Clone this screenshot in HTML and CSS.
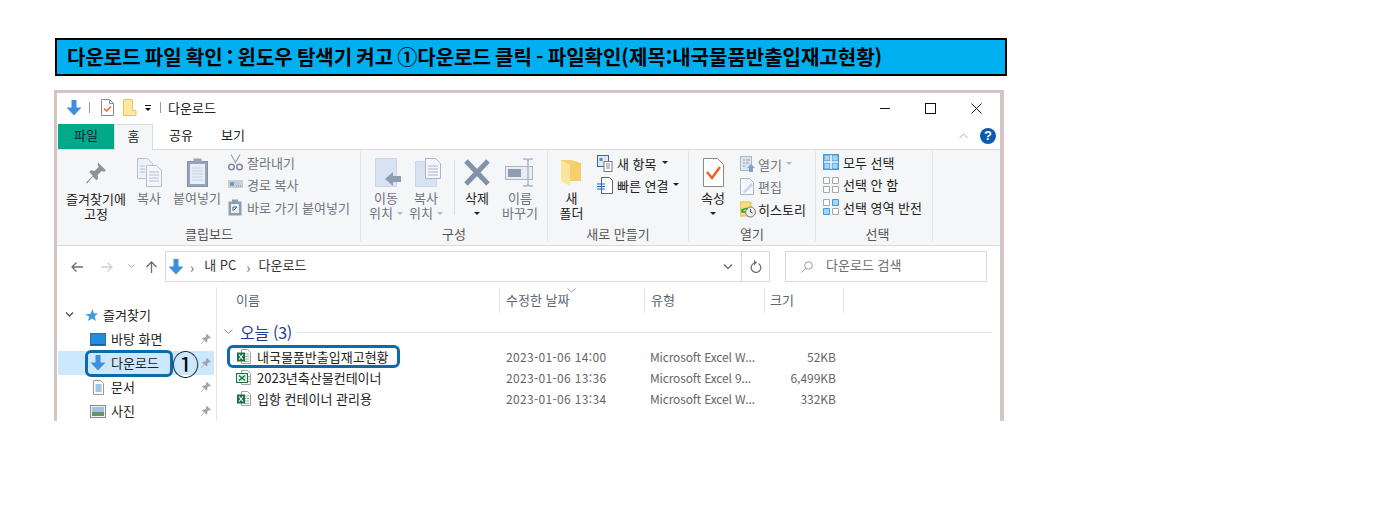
FILE: index.html
```html
<!DOCTYPE html>
<html lang="ko">
<head>
    <meta charset="UTF-8">
    <title>다운로드 파일 확인</title>
    <link rel="stylesheet" href="styles.css">
</head>
<body>
    <svg class="defs" width="0" height="0">
        <symbol id="down" viewBox="0 0 16 16"><path d="M5.500 0h5v7.500h5L8 15.500 .5 7.500h5z" fill="#3d8fdc"/></symbol>
        <symbol id="pin" viewBox="0 0 12 12"><path d="M7 1l4 4-1 .6-1.200-.4-1.600 1.600.3 1.700-.9.9-2-2L1.500 11l-.5-.5 3.100-3.100-2-2 .9-.9 1.700.3 1.600-1.600-.4-1.200z" fill="#a0a4aa"/></symbol>
        <symbol id="xls" viewBox="0 0 16 16"><path d="M5.500 .5h6l3 3v11h-9z" fill="#fff" stroke="#a3a3a3"/><path d="M8 5h5M8 7.500h5M8 10h5M8 12.500h5" stroke="#8bb59c"/><rect x="1" y="3.500" width="8" height="9" fill="#1d7044"/><path d="M3 5.500l4 5M7 5.500l-4 5" stroke="#fff" stroke-width="1.200"/></symbol>
        <symbol id="xls-old" viewBox="0 0 16 16"><path d="M5.500 .5h6l3 3v11h-9z" fill="#fff" stroke="#a3a3a3"/><path d="M11 6.500h3M11 9h3M11 11.500h3" stroke="#8bb59c"/><rect x=".5" y="3.500" width="11" height="9" fill="#e4f2e8" stroke="#1d7044"/><path d="M3 5.500l6 5M9 5.500l-6 5" stroke="#1d7044" stroke-width="1.500"/></symbol>
    </svg>

    <h1 class="banner">다운로드 파일 확인 : 윈도우 탐색기 켜고 ①다운로드 클릭 - 파일확인(제목:내국물품반출입재고현황)</h1>

    <div class="window">
        <div class="titlebar">
            <svg class="qa-arrow" width="16" height="16"><use href="#down"/></svg>
            <span class="qa-sep"></span>
            <svg class="qa-check" width="13" height="17" viewBox="0 0 13 17"><path d="M.5.5h8l4 4v12H.500z" fill="#fff" stroke="#8a8a8a"/><path d="M8.500.5v4h4" fill="none" stroke="#8a8a8a"/><path d="M3 9.500l2.500 2.500L10 7.500" fill="none" stroke="#e8622a" stroke-width="1.500"/></svg>
            <svg class="qa-folder" width="14" height="17" viewBox="0 0 14 17"><path d="M.5.5h9v11h3.500v5H.5z" fill="#ffe9a0" stroke="#e8c45a"/></svg>
            <span class="qa-drop"></span>
            <span class="qa-sep second"></span>
            <span class="title-text">다운로드</span>
            <div class="win-buttons">
                <svg width="10" height="10"><path d="M0 5.500h10" stroke="#111"/></svg>
                <svg width="11" height="11"><rect x=".5" y=".5" width="10" height="10" fill="none" stroke="#111"/></svg>
                <svg width="11" height="11"><path d="M.5.5l10 10M10.500.5l-10 10" stroke="#111"/></svg>
            </div>
        </div>

        <div class="tabs">
            <div class="tab file">파일</div>
            <div class="tab home">홈</div>
            <div class="tab share">공유</div>
            <div class="tab view">보기</div>
            <svg class="collapse" width="9" height="6"><path d="M.5 5L4.500 1l4 4" fill="none" stroke="#a8a8a8"/></svg>
            <span class="help">?</span>
        </div>

        <div class="ribbon">
            <section class="group clip">
                <div class="tools">
                    <div class="big w-pin">
                        <svg width="22" height="24" viewBox="0 0 22 24"><path d="M13 1l8 8-2 1.200-2.400-.8-4 4 .6 3.600-1.800 1.800-3.600-3.600L2 22l-1-1 6.800-6.800-3.600-3.600L6 8.800l3.600.6 4-4-.8-2.400z" fill="#8e9297"/></svg>
                        <span>즐겨찾기에<br>고정</span>
                    </div>
                    <div class="big w-copy off">
                        <svg width="25" height="29" viewBox="0 0 25 29"><path d="M.5.500h10l5 5v15H.500z" fill="#eef2f8" stroke="#b4c0d4"/><path d="M9.500 7.500h10l5 5v16h-15z" fill="#f4f6fa" stroke="#b4c0d4"/><path d="M12 14h10M12 17h10M12 20h10M12 23h10M3 8h5M3 11h5M3 14h5" stroke="#b4c0d4"/></svg>
                        <span>복사</span>
                    </div>
                    <div class="big w-paste off">
                        <svg width="21" height="29" viewBox="0 0 21 29"><rect x=".5" y="3.500" width="20" height="25" fill="#96a3b8" stroke="#8492a8"/><rect x="3" y="6" width="15" height="20" fill="#e8eef8"/><rect x="6.500" y=".5" width="8" height="5" fill="#96a3b8"/><path d="M5 10h11M5 13h11M5 16h11M5 19h11M5 22h11" stroke="#c8d2e2"/></svg>
                        <span>붙여넣기</span>
                    </div>
                    <div class="stack">
                        <div class="small off">
                            <svg width="15" height="17" viewBox="0 0 15 17"><path d="M3 .5l5 9M12 .5l-5 9" stroke="#9aa6b8" stroke-width="1.200"/><circle cx="3.500" cy="13" r="2.800" fill="none" stroke="#7d8ba0" stroke-width="1.500"/><circle cx="11.500" cy="13" r="2.800" fill="none" stroke="#7d8ba0" stroke-width="1.500"/></svg>
                            <span>잘라내기</span>
                        </div>
                        <div class="small off">
                            <svg width="15" height="17" viewBox="0 0 15 17"><rect y="4" width="15" height="8" fill="#c6d0de"/><path d="M2 6l1 4 1-4 1 4 1-4M8 10h1M10 10h1M12 10h1" stroke="#6b7a90" fill="none" stroke-width=".8"/></svg>
                            <span>경로 복사</span>
                        </div>
                        <div class="small off">
                            <svg width="15" height="17" viewBox="0 0 15 17"><rect x=".5" y="2.500" width="13" height="14" fill="#8f9db2"/><rect x="3" y="5" width="8" height="9" fill="#e8eef8"/><rect x="4" y=".5" width="6" height="3" fill="#8f9db2"/><path d="M5 12V8h4M9 8l-3 3" stroke="#55647a" fill="none"/></svg>
                            <span>바로 가기 붙여넣기</span>
                        </div>
                    </div>
                </div>
                <div class="group-name">클립보드</div>
            </section>

            <section class="group org">
                <div class="tools">
                    <div class="big w-move off">
                        <svg width="26" height="29" viewBox="0 0 26 29"><rect x=".5" y=".5" width="21" height="28" fill="#d8e2f0" stroke="#ccd6e6"/><path d="M10 21l8-7v4h8v6h-8v4z" fill="#8f9db2"/></svg>
                        <span>이동<br>위치<i class="tri light"></i></span>
                    </div>
                    <div class="big w-move off">
                        <svg width="26" height="29" viewBox="0 0 26 29"><rect x=".5" y="3.500" width="21" height="25" fill="#d8e2f0" stroke="#ccd6e6"/><path d="M10.500.5h10l5 5v15h-15z" fill="#f4f6fa" stroke="#aab6ca"/><path d="M13 8h10M13 11h10M13 14h10M13 17h10" stroke="#aab6ca"/></svg>
                        <span>복사<br>위치<i class="tri light"></i></span>
                    </div>
                    <span class="inner-sep"></span>
                    <div class="big w-del">
                        <svg width="26" height="27" viewBox="0 0 26 27"><path d="M2 2l22 23M24 2L2 25" stroke="#8292ab" stroke-width="5"/></svg>
                        <span>삭제<br><i class="tri"></i></span>
                    </div>
                    <div class="big w-ren off">
                        <svg width="30" height="29" viewBox="0 0 30 29"><rect x=".5" y="8.500" width="27" height="13" fill="#e8edf5" stroke="#aab6ca"/><rect x="3" y="11" width="13" height="8" fill="#8f9db2"/><path d="M18 1h4l1 2 1-2h4M18 28h4l1-2 1 2h4M23 3v23" stroke="#aab6ca" stroke-width="1.500" fill="none"/></svg>
                        <span>이름<br>바꾸기</span>
                    </div>
                </div>
                <div class="group-name">구성</div>
            </section>

            <section class="group new">
                <div class="tools">
                    <div class="big w-folder">
                        <svg width="21" height="27" viewBox="0 0 21 27"><path d="M0 1h10l10 3v18H9L0 17z" fill="#f6cf6a"/><path d="M0 1l9 5v21L0 22z" fill="#fbe59c"/></svg>
                        <span>새<br>폴더</span>
                    </div>
                    <div class="stack">
                        <div class="small">
                            <svg width="19" height="17" viewBox="0 0 19 17"><rect x=".5" y=".5" width="11" height="11" fill="#dfe8f4" stroke="#2f6f9f"/><rect x="2.500" y="3" width="3" height="3" fill="#4a90c8"/><rect x="7" y="6.500" width="8" height="10" fill="#fff" stroke="#777"/><path d="M9 9h4M9 11h4M9 13h4" stroke="#888"/></svg>
                            <span>새 항목</span><i class="tri"></i>
                        </div>
                        <div class="small">
                            <svg width="19" height="17" viewBox="0 0 19 17"><path d="M4.500.5h8l3 3v13h-11z" fill="#fff" stroke="#666"/><path d="M0 7h8M0 9.500h8M0 12h8" stroke="#1a66b0"/></svg>
                            <span>빠른 연결</span><i class="tri"></i>
                        </div>
                    </div>
                </div>
                <div class="group-name">새로 만들기</div>
            </section>

            <section class="group open">
                <div class="tools">
                    <div class="big w-prop">
                        <svg width="21" height="29" viewBox="0 0 21 29"><path d="M.5.500h14l6 6v22H.500z" fill="#fff" stroke="#8a8a8a"/><path d="M4 14l5 6 8-11" fill="none" stroke="#e8622a" stroke-width="2.500"/></svg>
                        <span>속성<br><i class="tri"></i></span>
                    </div>
                    <div class="stack">
                        <div class="small off">
                            <svg width="15" height="17" viewBox="0 0 15 17"><rect x=".5" y=".5" width="11" height="14" fill="#dfe5ee" stroke="#aab6ca"/><path d="M3 4h2M6 4h4M3 7h2M6 7h3M3 10h2" stroke="#8f9db2"/><path d="M11 8l4 4h-2v4h-4v-4H7z" fill="#7fa3c7"/></svg>
                            <span>열기</span><i class="tri light"></i>
                        </div>
                        <div class="small off">
                            <svg width="15" height="17" viewBox="0 0 15 17"><path d="M.5.5h9l4 4v12H.500z" fill="#f4f7fb" stroke="#aab6ca"/><path d="M3 14L11 5l2 2-8 8z" fill="#c6d6ea"/></svg>
                            <span>편집</span>
                        </div>
                        <div class="small hist">
                            <svg width="16" height="17" viewBox="0 0 16 17"><rect y="1" width="11" height="14" fill="#f8dc80" stroke="#e0bc50"/><circle cx="10.500" cy="11" r="5" fill="#eee" stroke="#777"/><path d="M10.500 8v3l2 1" stroke="#555" fill="none"/><path d="M2 11a4 4 0 0 1 6-3M2 8v3h3" stroke="#2e9e3e" stroke-width="1.500" fill="none"/></svg>
                            <span>히스토리</span>
                        </div>
                    </div>
                </div>
                <div class="group-name">열기</div>
            </section>

            <section class="group sel">
                <div class="stack">
                    <div class="small">
                        <svg width="16" height="16" viewBox="0 0 16 16"><rect width="16" height="16" fill="#3d9be0"/><path d="M8 1v14M1 8h14" stroke="#fff" stroke-width="1.500"/><path d="M1.500 1.500h5v5h-5zM9.500 1.500h5v5h-5zM1.500 9.500h5v5h-5zM9.500 9.500h5v5h-5z" fill="#a9d4f5"/></svg>
                        <span>모두 선택</span>
                    </div>
                    <div class="small">
                        <svg width="16" height="16" viewBox="0 0 16 16"><path d="M.5.5h6v6h-6zM9.500.5h6v6h-6zM.5 9.500h6v6h-6zM9.500 9.500h6v6h-6z" fill="#fff" stroke="#a8a8a8"/></svg>
                        <span>선택 안 함</span>
                    </div>
                    <div class="small">
                        <svg width="16" height="16" viewBox="0 0 16 16"><path d="M.5.5h6v6h-6zM9.500 9.500h6v6h-6z" fill="#fff" stroke="#a8a8a8"/><path d="M9.500.5h6v6h-6zM.5 9.500h6v6h-6z" fill="#a9d4f5" stroke="#3d9be0"/></svg>
                        <span>선택 영역 반전</span>
                    </div>
                </div>
                <div class="group-name">선택</div>
            </section>
        </div>

        <div class="address-row">
            <svg class="nav back" width="12" height="10"><path d="M12 5H1M5.500.5L1 5l4.500 4.500" fill="none" stroke="#6d6d6d" stroke-width="1.300"/></svg>
            <svg class="nav forward" width="12" height="10"><path d="M0 5h11M6.500.5L11 5 6.500 9.500" fill="none" stroke="#d0d0d0" stroke-width="1.300"/></svg>
            <svg class="nav recent" width="7" height="5"><path d="M.5.5l3 3 3-3" fill="none" stroke="#a8a8a8"/></svg>
            <svg class="nav up" width="11" height="12"><path d="M5.500 12V1M.5 6l5-5 5 5" fill="none" stroke="#6d6d6d" stroke-width="1.300"/></svg>
            <div class="address">
                <svg width="16" height="16"><use href="#down"/></svg>
                <span class="crumb-sep">›</span><span class="crumb">내 PC</span>
                <span class="crumb-sep">›</span><span class="crumb">다운로드</span>
                <svg class="addr-drop" width="10" height="6"><path d="M1 .5l4 4 4-4" fill="none" stroke="#707070" stroke-width="1.500"/></svg>
                <span class="addr-refresh">
                    <svg width="12" height="13" viewBox="0 0 12 13"><path d="M8.500 3.500a4.800 4.800 0 1 1-4-.5" fill="none" stroke="#707070" stroke-width="1.300"/><path d="M4 0v5.500l3-3z" fill="#707070"/></svg>
                </span>
            </div>
            <div class="search">
                <svg width="12" height="12"><circle cx="7.500" cy="4.500" r="3.800" fill="none" stroke="#999"/><path d="M4.800 7.200L.5 11.500" stroke="#b09ab8"/></svg>
                <span>다운로드 검색</span>
            </div>
        </div>

        <div class="explorer">
            <nav class="sidebar">
                <div class="side-row fav">
                    <svg class="fav-chev" width="9" height="6"><path d="M1 .5l3.500 3.500L8 .5" fill="none" stroke="#555" stroke-width="1.400"/></svg>
                    <svg width="13" height="13" viewBox="0 0 13 13"><path d="M7.500 0l1.400 4.300 4.100.2-3.200 2.800 1 4.700-3.700-2.500L3 12l1.200-4.500L0 5.500l5.500-.8z" fill="#3d9be0"/></svg>
                    <span>즐겨찾기</span>
                </div>
                <div class="side-row">
                    <svg width="16" height="13" viewBox="0 0 16 13"><rect x=".5" y=".5" width="15" height="12" fill="#1f8fe0" stroke="#3a6a9a"/><path d="M1 11.500h14" stroke="#0e5f9e"/></svg>
                    <span>바탕 화면</span>
                    <svg class="pin" width="12" height="12"><use href="#pin"/></svg>
                </div>
                <div class="side-row current">
                    <svg width="16" height="16"><use href="#down"/></svg>
                    <span>다운로드</span>
                    <svg class="pin" width="12" height="12"><use href="#pin"/></svg>
                </div>
                <div class="side-row">
                    <svg width="16" height="15" viewBox="0 0 16 15"><path d="M3.500.5h7l3 3v11h-10z" fill="#fff" stroke="#999"/><path d="M5.500 5h6M5.500 7h6M5.500 9h6M5.500 11h6" stroke="#3a8ad0"/></svg>
                    <span>문서</span>
                    <svg class="pin" width="12" height="12"><use href="#pin"/></svg>
                </div>
                <div class="side-row">
                    <svg width="16" height="13" viewBox="0 0 16 13"><rect x=".5" y=".5" width="15" height="12" fill="#eef2f6" stroke="#8a8a8a"/><rect x="2" y="2" width="12" height="5" fill="#9ec2df"/><rect x="2" y="7" width="12" height="4" fill="#6f8f6a"/></svg>
                    <span>사진</span>
                    <svg class="pin" width="12" height="12"><use href="#pin"/></svg>
                </div>
                <div class="callout side-callout"></div>
                <div class="callout-num">①</div>
            </nav>

            <main class="list">
                <div class="list-head">
                    <div class="col c-name">이름</div>
                    <div class="col c-date">수정한 날짜<svg class="sort" width="9" height="5"><path d="M.5.500l4 3.500 4-3.500" fill="none" stroke="#a0a0a0"/></svg></div>
                    <div class="col c-type">유형</div>
                    <div class="col c-size">크기</div>
                </div>
                <div class="list-group">
                    <svg width="9" height="6"><path d="M.5.500l4 4 4-4" fill="none" stroke="#8a8a8a"/></svg>
                    <span>오늘 (3)</span>
                    <i></i>
                </div>
                <div class="file-row">
                    <div class="f-name"><svg width="16" height="16"><use href="#xls"/></svg>내국물품반출입재고현황</div>
                    <div class="f-date">2023-01-06 14:00</div>
                    <div class="f-type">Microsoft Excel W...</div>
                    <div class="f-size">52KB</div>
                </div>
                <div class="file-row">
                    <div class="f-name"><svg width="16" height="16"><use href="#xls-old"/></svg>2023년축산물컨테이너</div>
                    <div class="f-date">2023-01-06 13:36</div>
                    <div class="f-type">Microsoft Excel 9...</div>
                    <div class="f-size">6,499KB</div>
                </div>
                <div class="file-row">
                    <div class="f-name"><svg width="16" height="16"><use href="#xls"/></svg>입항 컨테이너 관리용</div>
                    <div class="f-date">2023-01-06 13:34</div>
                    <div class="f-type">Microsoft Excel W...</div>
                    <div class="f-size">332KB</div>
                </div>
                <div class="callout file-callout"></div>
            </main>
        </div>
    </div>
</body>
</html>
```

FILE: styles.css
```css
* {
    margin: 0;
    padding: 0;
    box-sizing: border-box;
}

body {
    font-family: "Noto Sans CJK KR", "Noto Sans", sans-serif;
    font-size: 13px;
    color: #222;
    background-color: #fff;
    padding: 38px 0 0 54px;
    overflow: hidden;
}

svg {
    display: block;
    flex: none;
}

.defs {
    position: absolute;
}

.banner {
    width: 952px;
    height: 38px;
    margin-left: 1px;
    padding-left: 10px;
    border: 2px solid #000;
    background-color: #00b0f0;
    color: #000;
    font-size: 20px;
    font-weight: 700;
    line-height: 34px;
    word-spacing: -1.400px;
    white-space: nowrap;
    overflow: hidden;
}

.window {
    width: 950px;
    height: 331px;
    margin-top: 14px;
    border: solid #d4c5c5;
    border-width: 3px 4px 0 3px;
    background-color: #fff;
    position: relative;
}

/* the left edge runs a bit past the crop in the screenshot */
.window::before {
    content: "";
    position: absolute;
    left: -3px;
    top: 100%;
    width: 3px;
    height: 5px;
    background-color: #d4c5c5;
}

/* title bar */
.titlebar {
    display: flex;
    align-items: center;
    height: 29px;
    padding-left: 9px;
}

.qa-sep {
    width: 1px;
    height: 11px;
    margin: 0 11px 0 7px;
    background-color: #999;
}

.qa-sep.second {
    margin: 0 7px 0 9px;
}

.qa-folder {
    margin-left: 9px;
}

.qa-drop {
    width: 6px;
    height: 6px;
    margin-left: 8px;
    border-top: 1px solid #111;
    border-bottom: 3px solid transparent;
    position: relative;
}

.qa-drop::after {
    content: "";
    position: absolute;
    left: 0;
    top: 2px;
    border: 3px solid transparent;
    border-top-color: #111;
    border-bottom: 0;
}

.title-text {
    color: #222;
    line-height: 16px;
}

.win-buttons {
    display: flex;
    align-items: center;
    gap: 35px;
    margin-left: auto;
    padding: 1px 18px 0 0;
}

/* tabs */
.tabs {
    display: flex;
    align-items: flex-end;
    height: 28px;
    padding-left: 1px;
    border-bottom: 1px solid #dadbdc;
    position: relative;
}

.tab {
    height: 25px;
    line-height: 22px;
    text-align: center;
}

.tab.file {
    width: 56px;
    background-color: #00a98a;
    color: #123;
}

.tab.home {
    width: 39px;
    height: 26px;
    margin-bottom: -1px;
    background-color: #f5f6f7;
    border: solid #dadbdc;
    border-width: 1px 1px 0;
}

.tab.share {
    width: 56px;
}

.tab.view {
    width: 48px;
}

.collapse {
    margin: 0 12px 10px auto;
}

.help {
    width: 16px;
    height: 16px;
    margin: 0 4px 5px 0;
    border-radius: 50%;
    background-color: #0b5cad;
    color: #fff;
    font-family: "Liberation Sans", sans-serif;
    font-size: 13px;
    font-weight: 700;
    line-height: 16px;
    text-align: center;
}

/* ribbon */
.ribbon {
    display: flex;
    height: 96px;
    padding: 1px 0 4px 1px;
    background-color: #f5f6f7;
    border-bottom: 1px solid #dadbdc;
}

.group {
    display: flex;
    flex-direction: column;
    border-right: 1px solid #e2e3e4;
}

.group.clip { width: 303px; }
.group.org { width: 187px; }
.group.new { width: 141px; }
.group.open { width: 127px; }
.group.sel { width: 117px; padding-left: 7px; }

.tools {
    display: flex;
    height: 76px;
}

.group .stack {
    height: 74px;
}

.group-name {
    height: 14px;
    margin-top: auto;
    color: #555;
    line-height: 14px;
    text-align: center;
}

.big {
    display: flex;
    flex-direction: column;
    align-items: center;
    padding-top: 7px;
    line-height: 15px;
    text-align: center;
}

.big svg {
    height: 29px;
    margin-bottom: 3px;
}

.off {
    color: #6d7480;
}

.w-pin { width: 76px; }
.w-copy { width: 30px; }
.w-paste { width: 62px; margin-left: 2px; }
.w-move { width: 40px; }
.w-move span { margin-right: 4px; }
.w-del { width: 44px; }
.w-ren { width: 42px; }
.w-folder { width: 47px; }
.w-prop { width: 48px; }

.group.org .tools { padding-left: 7px; }
.group.new .tools { gap: 2px; }
.group.new .stack { padding-top: 1px; }
.group.open .stack { padding-left: 3px; padding-top: 2px; }

.w-pin svg { margin-top: 1px; }

.inner-sep {
    width: 1px;
    height: 55px;
    margin: 9px 0 0 6px;
    background-color: #dcdde0;
}

.small {
    display: flex;
    align-items: center;
    height: 22.500px;
    line-height: 15px;
    white-space: nowrap;
}

.small svg {
    margin-right: 4px;
}

.group.new .small svg {
    margin-right: 1px;
}

.group.open .small svg {
    margin-right: 3px;
}

.group.open .hist svg {
    margin-right: 2px;
}

.hist {
    color: #222;
}

.tri {
    display: inline-block;
    width: 0;
    height: 0;
    margin: 0 0 2px 5px;
    border: 3px solid transparent;
    border-top: 3px solid #222;
    border-bottom: 0;
    vertical-align: middle;
}

.big .tri {
    margin-left: 0;
}

.big .tri.light,
.tri.light {
    margin-left: 4px;
    border-top-color: #b5b8bd;
}

/* address bar */
.address-row {
    display: flex;
    align-items: center;
    height: 41px;
    padding-left: 14px;
}

.nav.back { margin-right: 18px; }
.nav.forward { margin-right: 15px; }
.nav.recent { margin-right: 11px; }
.nav.up { margin-right: 8px; }

.address {
    display: flex;
    align-items: center;
    width: 605px;
    height: 31px;
    padding-left: 2px;
    border: 1px solid #d9d9d9;
}

.crumb {
    margin: 0 10px 4px;
    color: #333;
}

.crumb-sep {
    margin-left: 6px;
    color: #666;
    font-size: 14px;
    line-height: 16px;
}

.crumb + .crumb-sep {
    margin-left: 0;
}

.crumb + .crumb-sep + .crumb {
    margin-left: 8px;
}

.addr-drop {
    margin: 0 8px 0 auto;
}

.addr-refresh {
    display: flex;
    align-items: center;
    justify-content: center;
    width: 28px;
    height: 100%;
    border-left: 1px solid #d9d9d9;
}

.search {
    display: flex;
    align-items: center;
    gap: 13px;
    width: 202px;
    height: 31px;
    margin-left: 15px;
    padding-left: 15px;
    border: 1px solid #d9d9d9;
    color: #6d6d6d;
}

.search span {
    margin-bottom: 4px;
}

/* nav pane and file list */
.explorer {
    display: flex;
    height: 134px;
    overflow: hidden;
}

.sidebar {
    width: 160px;
    height: 134px;
    padding: 16px 0 0 1px;
    border-right: 1px solid #e4e4e4;
    position: relative;
}

.side-row {
    display: flex;
    align-items: center;
    height: 24px;
    padding-left: 32px;
    color: #222;
    position: relative;
}

.side-row span {
    margin: 0 0 2px 5px;
}

.side-row.fav {
    padding-left: 7px;
}

.fav-chev {
    margin-right: 11px;
}

.side-row.current {
    width: 156px;
    background-color: #cce8ff;
}

.pin {
    margin-right: 4px;
}

.side-row span + .pin {
    position: absolute;
    right: 0;
}

.side-row.current span + .pin {
    margin-right: 2px;
}

.callout {
    position: absolute;
    border: 3px solid #0b6cab;
    border-radius: 6px;
}

.side-callout {
    left: 28px;
    top: 63px;
    width: 88px;
    height: 27px;
}

.callout-num {
    position: absolute;
    left: 115px;
    top: 59px;
    color: #000;
    font-size: 27px;
    line-height: 36px;
}

.list {
    flex: 1;
    position: relative;
}

.list-head {
    display: flex;
    height: 25px;
    margin-top: 1px;
    color: #5a6674;
}

.col {
    height: 25px;
    padding-left: 6px;
    border-right: 1px solid #e4e4e4;
    line-height: 24px;
    position: relative;
}

.c-name { width: 283px; padding-left: 19px; }
.c-date { width: 145px; }
.c-type { width: 120px; }
.c-size { width: 79px; padding-left: 5px; }

.sort {
    position: absolute;
    left: 67px;
    top: 0;
}

.list-group {
    display: flex;
    align-items: center;
    height: 22px;
    margin-top: 8px;
    padding: 0 8px 0 7px;
    color: #1d3f8f;
    font-size: 16px;
    letter-spacing: -.3px;
}

.list-group span {
    margin: 0 5px 0 7px;
    line-height: 18px;
}

.list-group i {
    flex: 1;
    height: 1px;
    background-color: #e4e4e4;
}

.file-row {
    display: flex;
    align-items: center;
    height: 21px;
    color: #666;
    font-size: 12px;
}

.file-row:nth-of-type(3) {
    margin-top: 3px;
}

.f-name {
    display: flex;
    align-items: center;
    gap: 5px;
    width: 289px;
    padding-left: 19px;
    color: #222;
    font-size: 13px;
    white-space: nowrap;
}

.f-date {
    width: 144px;
    letter-spacing: .35px;
}

.f-type {
    width: 120px;
    letter-spacing: -.15px;
}

.f-size {
    width: 66px;
    text-align: right;
}

.file-callout {
    left: 10px;
    top: 58px;
    width: 173px;
    height: 23px;
}
```
